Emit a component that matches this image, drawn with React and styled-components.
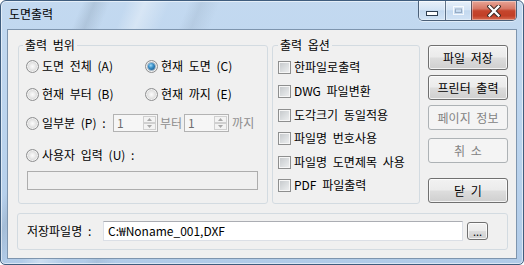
import React from "react";
import styled, { createGlobalStyle } from "styled-components";

const Global = createGlobalStyle`
  html, body { margin: 0; padding: 0; background: #ffffff; }
  body {
    font-family: "Noto Sans CJK KR", "Noto Sans", sans-serif;
    font-size: 12px;
    word-spacing: 3px;
    color: #000;
  }
  * { box-sizing: border-box; }
`;

const Window = styled.div`
  width: 524px;
  height: 265px;
  border: 1px solid #3f5d7e;
  border-radius: 6px 6px 5px 5px;
  overflow: hidden;
  display: flex;
  flex-direction: column;
  box-shadow: inset 0 0 0 1px rgba(255, 255, 255, 0.55);
  background:
    linear-gradient(112deg,
      transparent 0 13%,
      rgba(110, 130, 150, 0.22) 15%,
      transparent 17.5%,
      transparent 20%,
      rgba(255, 255, 255, 0.35) 23%,
      transparent 27%,
      transparent 30%,
      rgba(120, 140, 160, 0.16) 32%,
      transparent 35%,
      transparent 100%),
    linear-gradient(180deg, #c3d9f0 0%, #bad3ed 55%, #b1cbe8 100%);
`;

const TitleBar = styled.div`
  height: 28px;
  flex: none;
  display: flex;
  align-items: flex-start;
  padding-left: 8px;
`;

const Title = styled.div`
  flex: 1;
  padding-top: 6px;
  line-height: 14px;
  font-size: 12px;
  color: #000;
`;

const Caption = styled.div`
  display: flex;
  height: 20px;
  margin-right: 6px;
  border: 1px solid rgba(45, 65, 90, 0.8);
  border-top: none;
  border-radius: 0 0 5px 5px;
  overflow: hidden;
  box-shadow: 0 1px 0 rgba(255, 255, 255, 0.5);
`;

const CapBtn = styled.div`
  width: ${(p) => p.$w}px;
  height: 100%;
  display: flex;
  align-items: center;
  justify-content: center;
  border-left: ${(p) => (p.$first ? "none" : "1px solid rgba(45, 65, 90, 0.7)")};
  background: ${(p) =>
    p.$close
      ? "linear-gradient(180deg, #e8a596 0%, #d77866 40%, #c5452d 52%, #c13f27 78%, #d86c52 100%)"
      : "linear-gradient(180deg, rgba(255,255,255,0.6) 0%, rgba(235,243,252,0.45) 45%, rgba(195,215,236,0.35) 52%, rgba(222,236,250,0.55) 100%)"};
  box-shadow: inset 0 0 0 1px rgba(255, 255, 255, 0.35);
`;

const Client = styled.div`
  margin: 0 6px;
  height: 230px;
  flex: none;
  border: 1px solid #7e95ae;
  background: #f0f0f0;
  padding: 8px 8px 8px 9px;
  display: flex;
  flex-direction: column;
`;

const TopRow = styled.div`
  display: flex;
  height: 166px;
  margin-left: 1px;
`;

const Group = styled.fieldset`
  margin: 0;
  min-width: 0;
  width: ${(p) => p.$w}px;
  height: ${(p) => p.$h}px;
  flex: none;
  border: 1px solid #d3dbe1;
  border-radius: 3px;
  padding: ${(p) => p.$pad};
`;

const Legend = styled.legend`
  padding: 0 2px;
  margin-left: ${(p) => p.$ml}px;
  line-height: 14px;
  font-size: 12px;
`;

const Row = styled.div`
  display: flex;
  align-items: center;
  height: ${(p) => p.$h || 20}px;
  margin-top: ${(p) => p.$mt || 0}px;
`;

const Option = styled.label`
  display: flex;
  align-items: center;
  gap: 3px;
  width: ${(p) => (p.$w ? `${p.$w}px` : "auto")};
  flex: none;
  line-height: 14px;
  white-space: nowrap;
`;

const RadioCircle = styled.span`
  width: 13px;
  height: 13px;
  flex: none;
  border-radius: 50%;
  border: 1px solid #8e8f90;
  background: radial-gradient(circle at 50% 50%, #fbfbfb 0, #ececec 2.5px, #d7d7d7 5px, #c6c6c6 6.5px);
  box-shadow: inset 0 0 0 1px #f2f2f2;
  display: flex;
  align-items: center;
  justify-content: center;
  &::after {
    content: "";
    display: ${(p) => (p.$on ? "block" : "none")};
    width: 7px;
    height: 7px;
    border-radius: 50%;
    background: radial-gradient(circle at 40% 35%, #9fdcfa 0, #3a8fc8 40%, #124b7c 100%);
    box-shadow: 0 0 0 1px rgba(40, 100, 150, 0.35);
  }
`;

const CheckBox = styled.span`
  width: 13px;
  height: 13px;
  flex: none;
  border: 1px solid #8e8f8f;
  background: linear-gradient(135deg, #c3c6c9 0%, #d9dcde 50%, #f0f1f2 100%);
  box-shadow: inset 0 0 0 1px #f6f6f6;
`;

const Spin = styled.div`
  width: 45px;
  height: 18px;
  flex: none;
  border: 1px solid #b3b3b3;
  background: #f6f6f6;
  display: flex;
`;

const SpinText = styled.span`
  flex: 1;
  padding-left: 3px;
  line-height: 16px;
  color: #6d6d6d;
`;

const SpinBtns = styled.div`
  width: 14px;
  display: flex;
  flex-direction: column;
  padding: 1px 1px 1px 0;
`;

const SpinBtn = styled.span`
  flex: 1;
  border: 1px solid #d0d0d0;
  background: #f3f3f3;
  display: flex;
  align-items: center;
  justify-content: center;
`;

const Dim = styled.span`
  color: #8d8d8d;
  line-height: 14px;
  margin-left: ${(p) => p.$ml || 0}px;
  margin-right: ${(p) => p.$mr || 0}px;
  white-space: nowrap;
  flex: none;
`;

const DisabledBox = styled.div`
  margin-top: 6px;
  margin-left: 1px;
  width: 231px;
  height: 19px;
  border: 1px solid #adadad;
  background: #f0f0f0;
`;

const Buttons = styled.div`
  width: 80px;
  flex: none;
  margin-left: 8px;
  margin-top: 7px;
  display: flex;
  flex-direction: column;
`;

const Button = styled.div`
  height: ${(p) => p.$h || 25}px;
  width: ${(p) => (p.$w ? `${p.$w}px` : "100%")};
  flex: none;
  margin-top: ${(p) => p.$mt || 0}px;
  border-radius: 3px;
  display: flex;
  align-items: center;
  justify-content: center;
  line-height: 14px;
  font-size: 12px;
  white-space: nowrap;
  border: 1px solid ${(p) => (p.$disabled ? "#adb2b5" : "#707070")};
  color: ${(p) => (p.$disabled ? "#838383" : "#000")};
  background: ${(p) =>
    p.$disabled
      ? "#f4f4f4"
      : "linear-gradient(180deg, #f2f2f2 0%, #ebebeb 48%, #dddddd 52%, #cfcfcf 100%)"};
  box-shadow: ${(p) => (p.$disabled ? "none" : "inset 0 0 0 1px rgba(255,255,255,0.75)")};
`;

const FileRow = styled.div`
  display: flex;
  align-items: center;
  height: 20px;
`;

const FileLabel = styled.span`
  width: 76px;
  flex: none;
  line-height: 14px;
  white-space: nowrap;
`;

const TextBox = styled.div`
  width: 360px;
  height: 20px;
  flex: none;
  background: #fff;
  border: 1px solid #dbdfe6;
  border-top-color: #abadb3;
  padding-left: 4px;
  line-height: 18px;
  white-space: nowrap;
`;

const Browse = styled(Button)`
  margin-left: 4px;
  align-items: flex-end;
  padding-bottom: 2px;
  font-size: 11px;
  line-height: 11px;
`;

const Arrow = ({ up }) => (
  <svg width="5" height="3" viewBox="0 0 5 3">
    <path d={up ? "M0 3 L2.5 0 L5 3 Z" : "M0 0 L2.5 3 L5 0 Z"} fill="#a8a8a8" />
  </svg>
);

const Spinner = ({ value }) => (
  <Spin>
    <SpinText>{value}</SpinText>
    <SpinBtns>
      <SpinBtn>
        <Arrow up />
      </SpinBtn>
      <SpinBtn>
        <Arrow />
      </SpinBtn>
    </SpinBtns>
  </Spin>
);

const Radio = ({ children, on, w }) => (
  <Option $w={w}>
    <RadioCircle $on={on} />
    <span>{children}</span>
  </Option>
);

const Check = ({ children }) => (
  <Option>
    <CheckBox />
    <span>{children}</span>
  </Option>
);

const checks = [
  { t: "한파일로출력", mt: 0 },
  { t: "DWG 파일변환", mt: 4 },
  { t: "도각크기 동일적용", mt: 4 },
  { t: "파일명 번호사용", mt: 3 },
  { t: "파일명 도면제목 사용", mt: 4 },
  { t: "PDF 파일출력", mt: 3 },
];

export default function App() {
  return (
    <>
      <Global />
      <Window>
        <TitleBar>
          <Title>도면출력</Title>
          <Caption>
            <CapBtn $w={26} $first>
              <svg width="12" height="6" viewBox="0 0 12 6" style={{ marginTop: 6 }}>
                <rect x="0.5" y="0.5" width="11" height="4" fill="#fff" stroke="#2f3f52" strokeWidth="1" />
              </svg>
            </CapBtn>
            <CapBtn $w={26}>
              <svg width="11" height="9" viewBox="0 0 11 9">
                <rect x="0.5" y="0.5" width="10" height="8" fill="none" stroke="rgba(255,255,255,0.8)" strokeWidth="1" />
                <rect x="2.5" y="3" width="6" height="3.5" fill="none" stroke="rgba(120,140,165,0.6)" strokeWidth="1" />
              </svg>
            </CapBtn>
            <CapBtn $w={45} $close>
              <svg width="14" height="12" viewBox="0 0 14 12">
                <path d="M2.5 1.5 L11.5 10.5 M11.5 1.5 L2.5 10.5" stroke="#3a2a26" strokeWidth="4.2" strokeLinecap="square" />
                <path d="M2.5 1.5 L11.5 10.5 M11.5 1.5 L2.5 10.5" stroke="#ffffff" strokeWidth="2.3" strokeLinecap="square" />
              </svg>
            </CapBtn>
          </Caption>
        </TitleBar>

        <Client>
          <TopRow>
            <Group $w={250} $h={166} $pad="4px 9px 0 7px">
              <Legend $ml={-3}>출력 범위</Legend>
              <Row>
                <Radio w={119}>도면 전체 (A)</Radio>
                <Radio on>현재 도면 (C)</Radio>
              </Row>
              <Row $mt={8}>
                <Radio w={119}>현재 부터 (B)</Radio>
                <Radio>현재 까지 (E)</Radio>
              </Row>
              <Row $mt={9}>
                <Radio w={87}>일부분 (P) :</Radio>
                <Spinner value="1" />
                <Dim $ml={2} $mr={2}>부터</Dim>
                <Spinner value="1" />
                <Dim $ml={3}>까지</Dim>
              </Row>
              <Row $mt={12}>
                <Radio>사용자 입력 (U) :</Radio>
              </Row>
              <DisabledBox />
            </Group>

            <Group $w={148} $h={166} $pad="5px 4px 0 5px" style={{ marginLeft: 4 }}>
              <Legend $ml={0}>출력 옵션</Legend>
              {checks.map((c) => (
                <Row key={c.t} $mt={c.mt}>
                  <Check>{c.t}</Check>
                </Row>
              ))}
            </Group>

            <Buttons>
              <Button>파일 저장</Button>
              <Button $mt={5}>프린터 출력</Button>
              <Button $mt={5} $disabled>
                페이지 정보
              </Button>
              <Button $mt={8} $disabled>
                취 소
              </Button>
              <Button $mt={15}>닫 기</Button>
            </Buttons>
          </TopRow>

          <Group $w={491} $h={37} $pad="7px 9px 0 9px" style={{ marginTop: 9 }}>
            <FileRow>
              <FileLabel>저장파일명 :</FileLabel>
              <TextBox>C:₩Noname_001,DXF</TextBox>
              <Browse $w={21} $h={18}>...</Browse>
            </FileRow>
          </Group>
        </Client>
      </Window>
    </>
  );
}
